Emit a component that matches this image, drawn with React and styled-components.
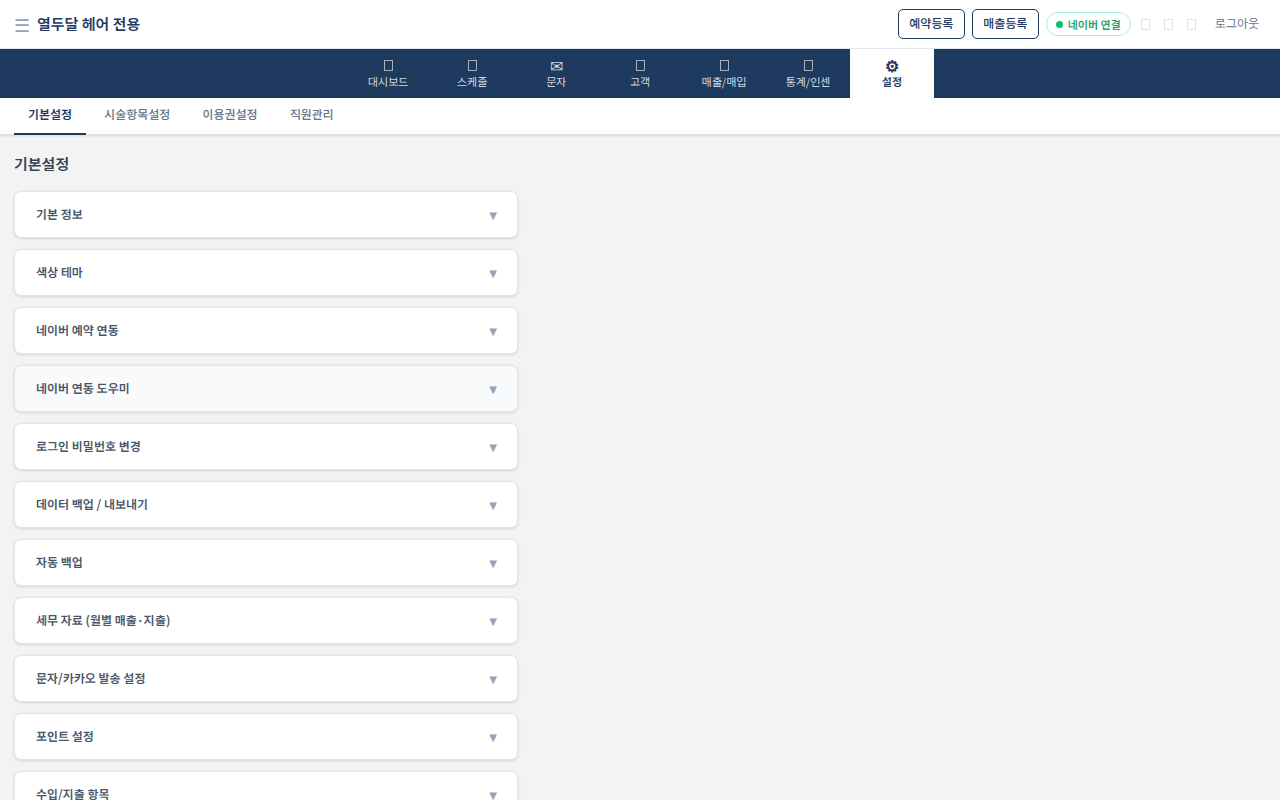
import React from "react"
import styled, { createGlobalStyle } from "styled-components"

const GlobalStyle = createGlobalStyle`
  * {
    box-sizing: border-box;
  }

  body {
    margin: 0;
    background-color: #f3f3f3;
    color: #334155;
    font-family: "Noto Sans KR", "Noto Sans CJK KR", sans-serif;
    font-size: 14px;
    line-height: 20px;
  }

  button {
    font-family: inherit;
    cursor: pointer;
  }
`

const TopBar = styled.header`
  display: flex;
  justify-content: space-between;
  align-items: center;
  height: 49px;
  padding: 0 14px;
  background-color: white;
  border-bottom: 1px solid #e2e8f0;
`

const Brand = styled.div`
  display: flex;
  align-items: center;
  gap: 7px;

  h1 {
    margin: 0;
    color: #1e3a5f;
    font-size: 15px;
    font-weight: 600;
  }
`

const MenuButton = styled.button`
  padding: 0;
  border: 0;
  background: none;
  color: #94a3b8;
  font-size: 18px;
  line-height: 20px;
`

const Actions = styled.div`
  display: flex;
  align-items: center;
  gap: 7px;
`

const OutlineButton = styled.button`
  min-width: 67px;
  height: 30px;
  padding: 0 10px 3px;
  border: 1px solid #1e3a5f;
  border-radius: 5px;
  background-color: white;
  color: #1e3a5f;
  font-size: 12px;
  font-weight: 500;
`

const StatusBadge = styled.span`
  display: flex;
  align-items: center;
  gap: 5px;
  height: 24px;
  padding: 0 9px;
  border: 1px solid #a7f3d0;
  border-radius: 12px;
  color: #22a06b;
  font-size: 11px;
  font-weight: 600;

  &::before {
    content: "";
    width: 7px;
    height: 7px;
    border-radius: 50%;
    background-color: #03c075;
  }
`

const GlyphBox = styled.span`
  display: block;
  width: 9px;
  height: 11px;
  border: 1px solid ${({ $color }) => $color};
`

const IconGroup = styled.div`
  display: flex;
  gap: 7px;
  padding-right: 1px;
`

const IconButton = styled.button`
  display: flex;
  justify-content: center;
  width: 16px;
  padding: 0;
  border: 0;
  background: none;
`

const LogoutButton = styled.button`
  padding: 0 7px 3px;
  border: 0;
  background: none;
  color: #64748b;
  font-size: 12px;
`

const MainNav = styled.nav`
  display: flex;
  justify-content: center;
  height: 49px;
  background-color: #1e3a5f;
`

const NavItem = styled.a`
  display: flex;
  flex-direction: column;
  align-items: center;
  width: 84px;
  padding-top: 8px;
  background-color: ${({ $active }) => ($active ? "white" : "transparent")};
  color: ${({ $active }) => ($active ? "#1e3a5f" : "#d2d8df")};
  font-size: 11px;
  font-weight: ${({ $active }) => ($active ? 600 : 400)};
  line-height: 16px;
  text-decoration: none;
`

const NavIcon = styled.span`
  display: flex;
  align-items: center;
  height: 16px;
  font-size: 16px;
  line-height: 16px;
`

const SubNav = styled.nav`
  display: flex;
  gap: 4px;
  height: 37px;
  padding: 0 14px;
  background-color: white;
  border-bottom: 1px solid #e2e2e5;
  box-shadow: 0 1px 3px rgba(0, 0, 0, 0.12);
`

const SubNavItem = styled.a`
  height: 37px;
  padding: 6px 14px 0;
  border-bottom: 2px solid ${({ $active }) => ($active ? "#1e3a5f" : "transparent")};
  color: ${({ $active }) => ($active ? "#1e3a5f" : "#64748b")};
  font-size: 12px;
  font-weight: ${({ $active }) => ($active ? 600 : 500)};
  text-decoration: none;
`

const Content = styled.main`
  padding: 19px 14px;

  h2 {
    margin: 0 0 17px;
    color: #334155;
    font-size: 15px;
    font-weight: 600;
    line-height: 20px;
  }
`

const SectionList = styled.div`
  display: flex;
  flex-direction: column;
  gap: 11px;
  max-width: 504px;
`

const SectionButton = styled.button`
  display: flex;
  justify-content: space-between;
  align-items: center;
  width: 100%;
  height: 47px;
  padding: 0 20px 2px 21px;
  border: 1px solid #e2e4e8;
  border-radius: 7px;
  background-color: ${({ $hovered }) => ($hovered ? "#f8fafc" : "white")};
  box-shadow: 0 1px 3px rgba(0, 0, 0, 0.12);
  color: #475569;
  font-size: 12px;
  font-weight: 600;
  text-align: left;
`

const Arrow = styled.span`
  padding-top: 4px;
  color: #94a3b8;
  font-family: "DejaVu Sans", sans-serif;
  font-size: 10px;
  font-weight: 400;
`

const navItems = [
  { label: "대시보드" },
  { label: "스케줄" },
  { icon: "✉", label: "문자" },
  { label: "고객" },
  { label: "매출/매입" },
  { label: "통계/인센" },
  { icon: "⚙", label: "설정", active: true },
]

const subNavItems = ["기본설정", "시술항목설정", "이용권설정", "직원관리"]

const sections = [
  "기본 정보",
  "색상 테마",
  "네이버 예약 연동",
  "네이버 연동 도우미",
  "로그인 비밀번호 변경",
  "데이터 백업 / 내보내기",
  "자동 백업",
  "세무 자료 (월별 매출·지출)",
  "문자/카카오 발송 설정",
  "포인트 설정",
  "수입/지출 항목",
]

const App = () => {
  return (
    <>
      <GlobalStyle />
      <TopBar>
        <Brand>
          <MenuButton>☰</MenuButton>
          <h1>열두달 헤어 전용</h1>
        </Brand>
        <Actions>
          <OutlineButton>예약등록</OutlineButton>
          <OutlineButton>매출등록</OutlineButton>
          <StatusBadge>네이버 연결</StatusBadge>
          <IconGroup>
            {[0, 1, 2].map((i) => (
              <IconButton key={i}>
                <GlyphBox $color="#dde3ec" />
              </IconButton>
            ))}
          </IconGroup>
          <LogoutButton>로그아웃</LogoutButton>
        </Actions>
      </TopBar>
      <MainNav>
        {navItems.map(({ icon, label, active }) => (
          <NavItem key={label} href="#" $active={active}>
            <NavIcon>{icon || <GlyphBox $color="#a5b0bf" />}</NavIcon>
            {label}
          </NavItem>
        ))}
      </MainNav>
      <SubNav>
        {subNavItems.map((label, i) => (
          <SubNavItem key={label} href="#" $active={i === 0}>
            {label}
          </SubNavItem>
        ))}
      </SubNav>
      <Content>
        <h2>기본설정</h2>
        <SectionList>
          {sections.map((title, i) => (
            <SectionButton key={title} $hovered={i === 3}>
              {title}
              <Arrow>▼</Arrow>
            </SectionButton>
          ))}
        </SectionList>
      </Content>
    </>
  )
}

export default App
